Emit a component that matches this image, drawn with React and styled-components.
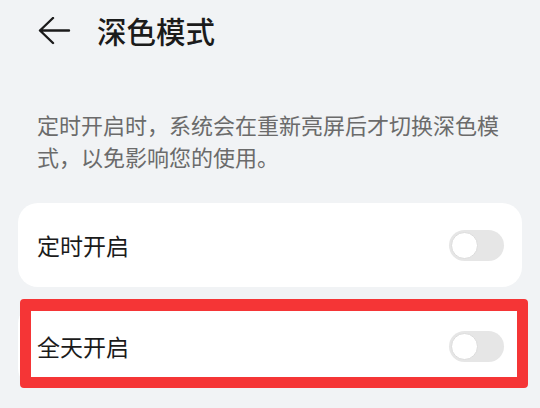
import React from "react";
import styled, { createGlobalStyle } from "styled-components";

const GlobalStyle = createGlobalStyle`
  html, body {
    margin: 0;
    padding: 0;
    background: #f1f3f5;
  }
  body {
    font-family: "Noto Sans CJK SC", "Noto Sans", sans-serif;
  }
`;

const Page = styled.div`
  width: 540px;
  height: 408px;
  overflow: hidden;
  background: #f1f3f5;
`;

const Header = styled.div`
  height: 62px;
  display: flex;
  align-items: center;
  gap: 26px;
  padding-left: 38px;
`;

const BackButton = styled.button`
  display: flex;
  padding: 0;
  border: none;
  background: none;
  cursor: pointer;
`;

const Title = styled.h1`
  margin: 0;
  font-size: 29.5px;
  font-weight: 500;
  line-height: 1;
  color: #1b1b1b;
`;

const Description = styled.p`
  margin: 46px 37px 0;
  font-size: 22px;
  line-height: 32px;
  color: #6b6b6b;
`;

const List = styled.div`
  margin: 31px 18px 0;
  display: flex;
  flex-direction: column;
  gap: 17px;
`;

const Card = styled.div`
  position: relative;
  height: 84px;
  display: flex;
  align-items: center;
  justify-content: space-between;
  padding: 0 18px 0 19px;
  background: #ffffff;
  border-radius: 20px;
`;

const Label = styled.span`
  font-size: 23px;
  color: #1b1b1b;
`;

const Marker = styled.div`
  position: absolute;
  top: -5px;
  left: 2px;
  right: -6px;
  bottom: 0;
  border: 11px solid #f53536;
  border-top-width: 12px;
  border-radius: 4px;
  pointer-events: none;
`;

const Track = styled.div`
  width: 55px;
  height: 31px;
  box-sizing: border-box;
  padding: 2px;
  border-radius: 16px;
  background: ${(p) => (p.$on ? "#0a59f7" : "#e6e6e6")};
  display: flex;
  justify-content: ${(p) => (p.$on ? "flex-end" : "flex-start")};
`;

const Thumb = styled.div`
  width: 27px;
  height: 27px;
  box-sizing: border-box;
  border-radius: 50%;
  background: #ffffff;
  border: 1px solid #dcdcdc;
`;

const BackArrow = () => (
  <svg width="33" height="28" viewBox="0 0 33 28" fill="none">
    <path
      d="M2 13.5 H31 M15 1 L2 13.5 L15 26"
      stroke="#1b1b1b"
      strokeWidth="2.4"
      strokeLinecap="round"
      strokeLinejoin="round"
    />
  </svg>
);

const Toggle = ({ on }) => (
  <Track $on={on}>
    <Thumb />
  </Track>
);

const options = [
  { id: "timed", label: "定时开启", on: false },
  { id: "allday", label: "全天开启", on: false, marked: true },
];

export default function App() {
  return (
    <Page>
      <GlobalStyle />
      <Header>
        <BackButton aria-label="返回">
          <BackArrow />
        </BackButton>
        <Title>深色模式</Title>
      </Header>
      <Description>
        定时开启时，系统会在重新亮屏后才切换深色模式，以免影响您的使用。
      </Description>
      <List>
        {options.map((o) => (
          <Card key={o.id}>
            <Label>{o.label}</Label>
            <Toggle on={o.on} />
            {o.marked && <Marker />}
          </Card>
        ))}
      </List>
    </Page>
  );
}
